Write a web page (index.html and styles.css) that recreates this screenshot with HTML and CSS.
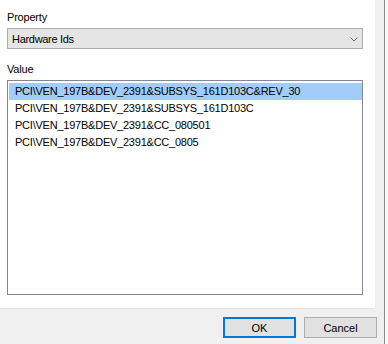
FILE: index.html
```html
<!DOCTYPE html>
<html>
<head>
<meta charset="utf-8">
<link rel="stylesheet" href="styles.css">
</head>
<body>
<div class="window">
  <div class="main">
    <div class="panel">
      <div class="label label-property">Property</div>
      <div class="combo">
        <span class="combo-text">Hardware Ids</span>
        <svg class="chevron" width="8" height="5" viewBox="0 0 8 5"><polyline points="0.5,0.5 4,4 7.5,0.5" fill="none" stroke="#6d6d6d" stroke-width="1"/></svg>
      </div>
      <div class="label label-value">Value</div>
      <div class="listbox">
        <div class="item selected">PCI\VEN_197B&amp;DEV_2391&amp;SUBSYS_161D103C&amp;REV_30</div>
        <div class="item">PCI\VEN_197B&amp;DEV_2391&amp;SUBSYS_161D103C</div>
        <div class="item">PCI\VEN_197B&amp;DEV_2391&amp;CC_080501</div>
        <div class="item">PCI\VEN_197B&amp;DEV_2391&amp;CC_0805</div>
      </div>
    </div>
    <div class="footer">
      <button class="btn btn-default">OK</button>
      <button class="btn">Cancel</button>
    </div>
  </div>
  <div class="edge-line"></div>
  <div class="edge-outer"></div>
</div>
</body>
</html>
```
FILE: styles.css
```css
html, body {
  margin: 0;
  padding: 0;
  width: 388px;
  height: 344px;
  overflow: hidden;
  background: #f0f0f0;
  font-family: "Liberation Sans", Arial, sans-serif;
  font-size: 11px;
  color: #000;
}
.window {
  display: flex;
  height: 344px;
}
.main {
  width: 384px;
  display: flex;
  flex-direction: column;
}
.edge-line {
  width: 1px;
  background: #8c8c8c;
}
.edge-outer {
  flex: 1;
  background: #f7f7f7;
}
.panel {
  width: 375px;
  height: 309px;
  box-sizing: border-box;
  background: #fff;
  border-bottom: 1px solid #e3e3e3;
  padding: 0 12px 0 7px;
  display: flex;
  flex-direction: column;
}
.label {
  height: 14px;
  line-height: 14px;
  letter-spacing: -0.2px;
}
.label-property { margin-top: 10px; }
.label-value { margin-top: 13px; }
.combo {
  margin-top: 4px;
  height: 21px;
  box-sizing: border-box;
  border: 1px solid #adadad;
  background: #e5e5e5;
  display: flex;
  align-items: center;
  padding: 0 4px 0 4px;
}
.combo-text {
  flex: 1;
  letter-spacing: -0.3px;
}
.chevron { display: block; margin-top: 1px; }
.listbox {
  margin-top: 4px;
  height: 215px;
  box-sizing: border-box;
  border: 1px solid #828790;
  padding: 2px 0 0 1px;
  background: #fff;
}
.item {
  height: 17px;
  line-height: 17px;
  padding-left: 6px;
  letter-spacing: -0.23px;
  white-space: nowrap;
}
.item.selected {
  background: #a2cdfb;
}
.footer {
  flex: 1;
  display: flex;
  justify-content: flex-end;
  align-items: flex-start;
  gap: 8px;
  padding: 8px 7px 0 0;
}
.btn {
  width: 73px;
  height: 21px;
  box-sizing: border-box;
  border: 1px solid #adadad;
  background: #e1e1e1;
  font-family: "Liberation Sans", Arial, sans-serif;
  font-size: 11px;
  color: #000;
  padding: 0;
  margin: 0;
}
.btn-default {
  border: 2px solid #0078d7;
}
```
